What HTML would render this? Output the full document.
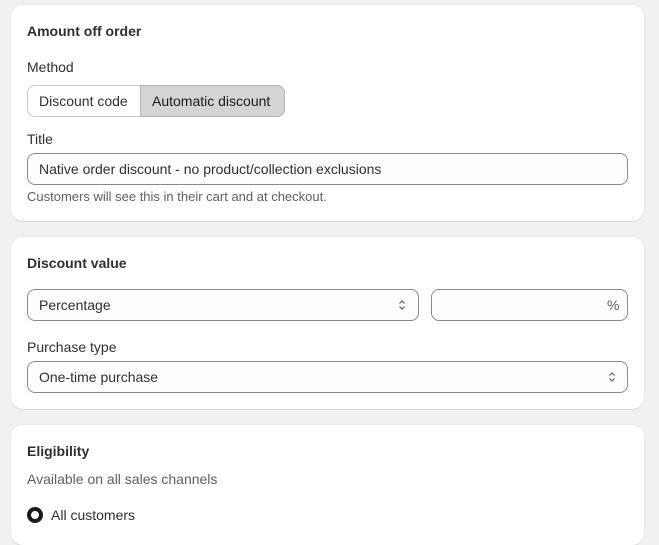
<!DOCTYPE html>
<html><head><style>
*{box-sizing:border-box;margin:0;padding:0}
body{width:659px;height:530px;background:#f1f1f1;font-family:"Liberation Sans",sans-serif;font-size:14px;color:#303030;position:relative;overflow:hidden}
.card{position:absolute;left:11px;width:633px;background:#fff;border-radius:12px;box-shadow:0 1px 0 #d8d8d8,0 0 0 1px #ebebeb}
.t{position:absolute;white-space:nowrap;line-height:16px}
.b{font-weight:bold;color:#303030;font-size:14px}
.box{position:absolute;border:1px solid #8a8a8a;border-radius:8px;background:#fdfdfd}
.chev{position:absolute;width:8px;height:12px}
</style></head><body>
<div class="card" style="top:5px;height:216px"></div>
<div class="card" style="top:237px;height:172px"></div>
<div class="card" style="top:425px;height:120px"></div>

<div class="t b" style="left:27px;top:23px">Amount off order</div>
<div class="t" style="left:27px;top:59px">Method</div>
<div class="box" style="left:27px;top:85px;width:258px;height:32px;border-color:#c8c8c8;background:#fff"></div>
<div style="position:absolute;left:140px;top:85px;width:145px;height:32px;background:#d4d4d4;border:1px solid #b5b5b5;border-radius:0 8px 8px 0"></div>
<div class="t" style="left:39px;top:93px">Discount code</div>
<div class="t" style="left:152px;top:93px;color:#1a1a1a">Automatic discount</div>
<div class="t" style="left:27px;top:131px">Title</div>
<div class="box" style="left:27px;top:153px;width:601px;height:32px"></div>
<div class="t" style="left:39px;top:161px">Native order discount - no product/collection exclusions</div>
<div class="t" style="left:27px;top:189px;font-size:13px;color:#616161">Customers will see this in their cart and at checkout.</div>

<div class="t b" style="left:27px;top:255px">Discount value</div>
<div class="box" style="left:27px;top:289px;width:392px;height:32px"></div>
<div class="t" style="left:39px;top:297px">Percentage</div>
<svg class="chev" style="left:398px;top:299px" viewBox="0 0 8 12"><path d="M1.5 4.5L4 2l2.5 2.5M1.5 7.5L4 10l2.5-2.5" fill="none" stroke="#616161" stroke-width="1.2"/></svg>
<div class="box" style="left:431px;top:289px;width:197px;height:32px"></div>
<div class="t" style="left:607px;top:297px;color:#616161">%</div>
<div class="t" style="left:27px;top:339px">Purchase type</div>
<div class="box" style="left:27px;top:361px;width:601px;height:32px"></div>
<div class="t" style="left:39px;top:369px">One-time purchase</div>
<svg class="chev" style="left:608px;top:371px" viewBox="0 0 8 12"><path d="M1.5 4.5L4 2l2.5 2.5M1.5 7.5L4 10l2.5-2.5" fill="none" stroke="#616161" stroke-width="1.2"/></svg>

<div class="t b" style="left:27px;top:443px">Eligibility</div>
<div class="t" style="left:27px;top:471px;color:#616161">Available on all sales channels</div>
<div style="position:absolute;left:27px;top:507px;width:16px;height:16px;border-radius:50%;border:4px solid #1a1a1a;background:#fff"></div>
<div class="t" style="left:51px;top:507px">All customers</div>
</body></html>
